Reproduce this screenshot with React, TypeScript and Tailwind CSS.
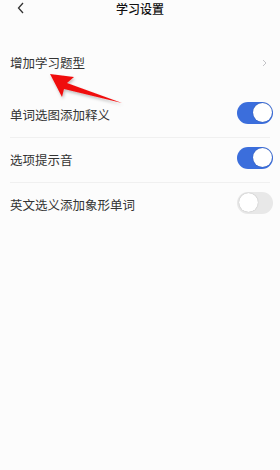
import React, { useState } from 'react';

const font = { fontFamily: '"Noto Sans CJK SC", "Noto Sans", sans-serif' };

function Toggle({ on, onClick }: { on: boolean; onClick: () => void }) {
  return (
    <button
      onClick={onClick}
      className={`relative w-[36px] h-[22px] rounded-full ${on ? 'bg-[#3b6edc]' : 'bg-[#e8e8e8]'}`}
    >
      <span
        className={`absolute top-[1.5px] w-[19px] h-[19px] rounded-full bg-white shadow-[0_0_1px_rgba(0,0,0,0.35)] ${on ? 'left-[15.5px]' : 'left-[1.5px]'}`}
      />
    </button>
  );
}

export default function App() {
  const [opts, setOpts] = useState([
    { label: '单词选图添加释义', on: true },
    { label: '选项提示音', on: true },
    { label: '英文选义添加象形单词', on: false },
  ]);

  const flip = (i: number) =>
    setOpts(o => o.map((x, j) => (j === i ? { ...x, on: !x.on } : x)));

  return (
    <div className="relative w-[280px] h-[470px] bg-[#fcfcfc] text-[#222]" style={font}>
      {/* header */}
      <div className="relative h-[17px] flex items-center justify-center">
        <svg className="absolute left-[17px] top-[2px]" width="8" height="12" viewBox="0 0 8 12">
          <path d="M6 1 L1.5 6 L6 11" fill="none" stroke="#333" strokeWidth="1.3" />
        </svg>
        <span className="text-[12px] font-medium leading-none text-[#111]">学习设置</span>
      </div>

      {/* entry row */}
      <div className="mt-[24px] h-[44px] px-[10px] flex items-center justify-between">
        <span className="text-[12.5px] text-[#333]">增加学习题型</span>
        <svg width="5" height="8" viewBox="0 0 5 8" className="mr-[3px]">
          <path d="M1 1 L4 4 L1 7" fill="none" stroke="#c4c4c8" strokeWidth="1" />
        </svg>
      </div>

      {/* toggles */}
      <div className="mt-[8px] px-[10px]">
        {opts.map((o, i) => (
          <div key={o.label}>
            <div className="h-[44px] flex items-center justify-between">
              <span className="text-[12.5px] text-[#333]">{o.label}</span>
              <div className="mr-[-3px]">
                <Toggle on={o.on} onClick={() => flip(i)} />
              </div>
            </div>
            {i < opts.length - 1 && <div className="h-px bg-[#f0f0f0]" />}
          </div>
        ))}
      </div>

      {/* annotation arrow */}
      <svg className="absolute left-0 top-0 pointer-events-none" width="280" height="470">
        <defs>
          <filter id="sh" x="-20%" y="-20%" width="140%" height="140%">
            <feDropShadow dx="1" dy="2" stdDeviation="1.5" floodColor="#000" floodOpacity="0.25" />
          </filter>
        </defs>
        <polygon
          points="50,74 74,77 67,83 122,103 64,89 62,97"
          fill="#f01010"
          filter="url(#sh)"
        />
      </svg>
    </div>
  );
}
